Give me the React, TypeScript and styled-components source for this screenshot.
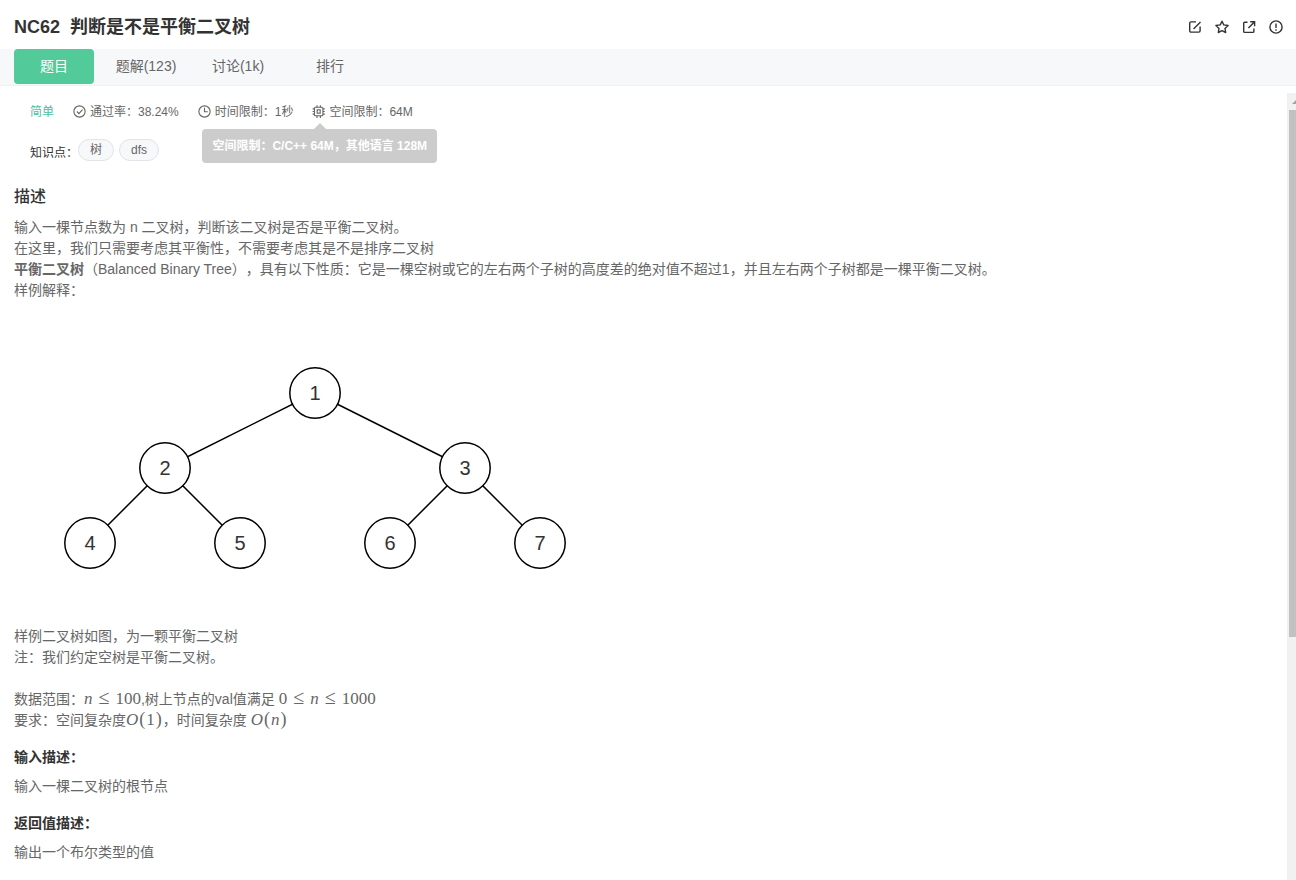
import React from "react";
import styled, { createGlobalStyle, css } from "styled-components";

const sans = `"Liberation Sans", "Noto Sans CJK SC", sans-serif`;

const GlobalStyle = createGlobalStyle`
  *, *::before, *::after { box-sizing: border-box; }
  body {
    margin: 0;
    background: #fff;
    color: #666;
    font: 14px/21px ${sans};
    text-spacing-trim: space-all;
  }
`;

const Page = styled.div`
  display: flex;
  flex-direction: column;
  height: 100vh;
  overflow: hidden;
`;

const Header = styled.header`
  display: flex;
  align-items: center;
  justify-content: space-between;
  flex: none;
  height: 49px;
  padding: 4px 12px 0 14px;
`;

const Title = styled.h1`
  display: flex;
  gap: 10px;
  margin: 0;
  color: #333;
  font-size: 18px;
  line-height: 24px;
  font-weight: 700;
`;

const Actions = styled.div`
  display: flex;
  gap: 11px;
`;

const IconButton = styled.button`
  display: flex;
  width: 16px;
  height: 16px;
  padding: 0;
  border: 0;
  background: none;
  color: #333;
  cursor: pointer;
`;

const Tabs = styled.nav`
  display: flex;
  flex: none;
  gap: 12px;
  height: 37px;
  padding-left: 14px;
  background: #f7f8fa;
  border-bottom: 1px solid #f0f1f3;
`;

const Tab = styled.button<{ $active?: boolean }>`
  width: 80px;
  height: 35px;
  padding: 0;
  border: 0;
  border-radius: 4px;
  background: none;
  color: #666;
  font: 14px/21px ${sans};
  white-space: nowrap;
  cursor: pointer;
  ${(p) =>
    p.$active &&
    css`
      background: #52ca99;
      color: #fff;
    `}
`;

const Body = styled.div`
  display: flex;
  flex: 1;
  min-height: 0;
  padding-top: 7px;
`;

const Content = styled.main`
  flex: 1;
  min-width: 0;
  padding: 9px 14px 0;
  overflow: hidden;
`;

const Meta = styled.div`
  display: flex;
  align-items: center;
  padding-left: 16px;
  font-size: 12px;
  line-height: 20px;
`;

const Level = styled.span`
  margin-right: 18px;
  color: #47bfa3;
`;

const MetaItem = styled.span`
  position: relative;
  display: flex;
  align-items: center;
  gap: 3px;
  margin-right: 18px;

  svg {
    margin-bottom: 2px;
  }
`;

const Tooltip = styled.div`
  position: absolute;
  top: 27px;
  left: -109px;
  padding: 0 10px;
  border-radius: 4px;
  background: #ccc;
  color: #fff;
  font-weight: 700;
  line-height: 34px;
  white-space: nowrap;

  &::before {
    content: "";
    position: absolute;
    top: -6px;
    left: 112px;
    border: 6px solid transparent;
    border-top: 0;
    border-bottom-color: #ccc;
  }
`;

const Topics = styled.div`
  display: flex;
  align-items: flex-start;
  margin-top: 17px;
  padding-left: 16px;
  color: #333;
  font-size: 12px;
  line-height: 24px;
`;

const TopicLabel = styled.span`
  padding-top: 2px;
`;

const Tag = styled.a`
  height: 22px;
  margin-right: 5px;
  padding: 0 11px;
  border: 1px solid #e1e4e8;
  border-radius: 11px;
  background: #f7f8fa;
  color: #666;
  line-height: 20px;
  text-decoration: none;
`;

const SectionTitle = styled.h2`
  margin: 21px 0 10px;
  color: #333;
  font-size: 16px;
  line-height: 21px;
  font-weight: 500;
`;

const FieldTitle = styled.h3`
  margin: 16px 0 8px;
  color: #333;
  font-size: 14px;
  line-height: 21px;
  font-weight: 700;
`;

const Text = styled.p`
  margin: 0;
`;

const Gap = styled.div`
  height: 21px;
`;

const Diagram = styled.svg`
  display: block;
  width: 600px;
  height: 325px;
`;

const MathText = styled.span`
  font: 17px/20px "Liberation Serif", serif;
`;

const Relation = styled.span`
  margin: 0 6px;
  font-size: 20px;
  line-height: 16px;
`;

const Paren = styled.span`
  margin: 0 1px;
  font-size: 18px;
  line-height: 16px;
`;

const Scrollbar = styled.div`
  flex: none;
  width: 9px;
  padding-left: 2px;
  background: #f1f1f1;
  overflow: hidden;
`;

const ScrollArrow = styled.svg`
  display: block;
  width: 7px;
  height: 17px;
`;

const Thumb = styled.div`
  height: 67%;
  background: #c1c1c1;
`;

type Node = { label: string; x: number; y: number; parent?: number };

const nodes: Node[] = [
  { label: "1", x: 301, y: 92 },
  { label: "2", x: 151, y: 167, parent: 0 },
  { label: "3", x: 451, y: 167, parent: 0 },
  { label: "4", x: 76, y: 242, parent: 1 },
  { label: "5", x: 226, y: 242, parent: 1 },
  { label: "6", x: 376, y: 242, parent: 2 },
  { label: "7", x: 526, y: 242, parent: 2 },
];

const Tree = () => (
  <Diagram viewBox="0 0 600 325" role="img" aria-label="平衡二叉树">
    {nodes.map((n) =>
      n.parent === undefined ? null : (
        <line
          key={n.label}
          x1={nodes[n.parent].x}
          y1={nodes[n.parent].y}
          x2={n.x}
          y2={n.y}
          stroke="#000"
          strokeWidth="1.5"
        />
      )
    )}
    {nodes.map((n) => (
      <g key={n.label}>
        <circle cx={n.x} cy={n.y} r="25.2" fill="#fff" stroke="#000" strokeWidth="1.5" />
        <text x={n.x} y={n.y + 7} textAnchor="middle" fontSize="20" fill="#333">
          {n.label}
        </text>
      </g>
    ))}
  </Diagram>
);

const Icon = ({ size, children, width = 1.2 }: { size: number; children: React.ReactNode; width?: number }) => (
  <svg width={size} height={size} viewBox="0 0 16 16" fill="none" stroke="currentColor" strokeWidth={width} aria-hidden="true">
    {children}
  </svg>
);

const actions = [
  { name: "编辑", art: <path d="M9 2.9H4a1.3 1.3 0 0 0-1.3 1.3v7.6A1.3 1.3 0 0 0 4 13.1h7.8a1.3 1.3 0 0 0 1.3-1.3V7.5M6.5 9.9l7-7" /> },
  { name: "收藏", art: <path d="M8 2.2l1.8 3.7 4.3.6-3.1 2.9.7 4.1L8 11.7l-3.7 1.8.7-4.1-3.1-2.9 4.3-.6z" strokeLinejoin="round" /> },
  { name: "分享", art: <path d="M6.5 3.2H3.7a1 1 0 0 0-1 1v8.2a1 1 0 0 0 1 1h8.2a1 1 0 0 0 1-1V9.5M9.2 2.8h4.4v4.4M13.4 3L7.4 9" /> },
  {
    name: "反馈",
    art: (
      <>
        <circle cx="8" cy="8" r="6.1" />
        <path d="M8 4.4v4.7M8 10.2v1.5" />
      </>
    ),
  },
];

export default function App() {
  return (
    <>
      <GlobalStyle />
      <Page>
        <Header>
          <Title>
            <span>NC62</span>
            <span>判断是不是平衡二叉树</span>
          </Title>
          <Actions>
            {actions.map((a) => (
              <IconButton key={a.name} aria-label={a.name}>
                <Icon size={16} width={1.4}>{a.art}</Icon>
              </IconButton>
            ))}
          </Actions>
        </Header>
        <Tabs>
          <Tab $active>题目</Tab>
          <Tab>题解(123)</Tab>
          <Tab>讨论(1k)</Tab>
          <Tab>排行</Tab>
        </Tabs>
        <Body>
          <Content>
            <Meta>
              <Level>简单</Level>
              <MetaItem>
                <Icon size={15}>
                  <circle cx="8" cy="8" r="6" />
                  <path d="M5.2 8l2.2 2.3 3.8-4.4" />
                </Icon>
                通过率：38.24%
              </MetaItem>
              <MetaItem>
                <Icon size={15}>
                  <circle cx="8" cy="8" r="6" />
                  <path d="M8 4v4.3h3.5" />
                </Icon>
                时间限制：1秒
              </MetaItem>
              <MetaItem>
                <Icon size={15}>
                  <rect x="3.7" y="3.5" width="9" height="9" rx="1" />
                  <rect x="6.6" y="6.2" width="3.2" height="3.6" />
                  <path d="M6.4 1.2v2.4M10 1.2v2.4M6.4 12.4v2.4M10 12.4v2.4M1.7 5.2h2M1.7 8h2M1.7 10.8h2M12.7 5.2h2M12.7 8h2M12.7 10.8h2" />
                </Icon>
                空间限制：64M
                <Tooltip role="tooltip">空间限制：C/C++ 64M，其他语言 128M</Tooltip>
              </MetaItem>
            </Meta>
            <Topics>
              <TopicLabel>知识点：</TopicLabel>
              <Tag href="#tree">树</Tag>
              <Tag href="#dfs">dfs</Tag>
            </Topics>
            <SectionTitle>描述</SectionTitle>
            <Text>输入一棵节点数为 n 二叉树，判断该二叉树是否是平衡二叉树。</Text>
            <Text>在这里，我们只需要考虑其平衡性，不需要考虑其是不是排序二叉树</Text>
            <Text>
              <b>平衡二叉树</b>（Balanced Binary Tree），具有以下性质：它是一棵空树或它的左右两个子树的高度差的绝对值不超过1，并且左右两个子树都是一棵平衡二叉树。
            </Text>
            <Text>样例解释：</Text>
            <Tree />
            <Text>样例二叉树如图，为一颗平衡二叉树</Text>
            <Text>注：我们约定空树是平衡二叉树。</Text>
            <Gap />
            <Text>
              数据范围：<MathText><i>n</i><Relation>≤</Relation>100</MathText>,树上节点的val值满足{" "}
              <MathText>0<Relation>≤</Relation><i>n</i><Relation>≤</Relation>1000</MathText>
            </Text>
            <Text>
              要求：空间复杂度<MathText><i>O</i><Paren>(</Paren>1<Paren>)</Paren></MathText>，时间复杂度{" "}
              <MathText><i>O</i><Paren>(</Paren><i>n</i><Paren>)</Paren></MathText>
            </Text>
            <FieldTitle>输入描述：</FieldTitle>
            <Text>输入一棵二叉树的根节点</Text>
            <FieldTitle>返回值描述：</FieldTitle>
            <Text>输出一个布尔类型的值</Text>
          </Content>
          <Scrollbar aria-hidden="true">
            <ScrollArrow viewBox="0 0 7 17">
              <path d="M3 11l4-4v4z" fill="#a3a3a3" />
            </ScrollArrow>
            <Thumb />
          </Scrollbar>
        </Body>
      </Page>
    </>
  );
}
